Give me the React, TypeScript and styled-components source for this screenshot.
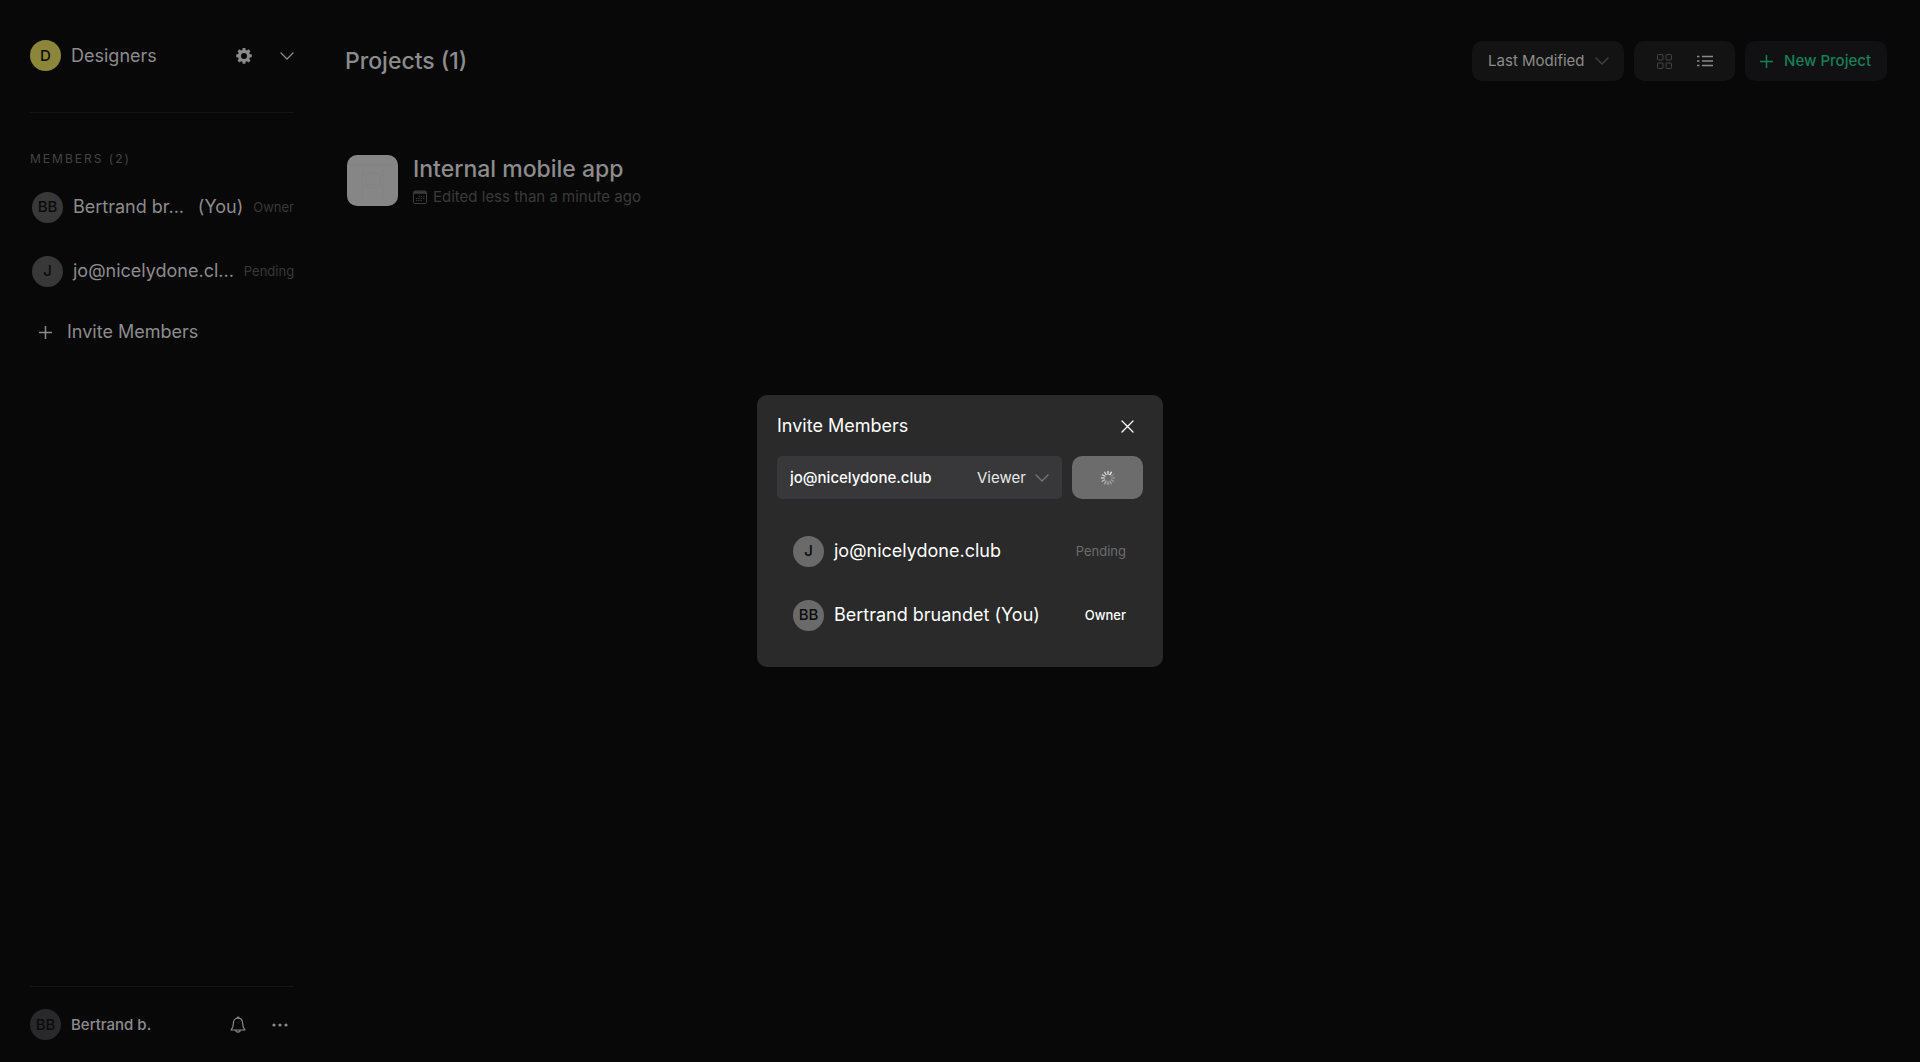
import React from "react";
import styled, { createGlobalStyle } from "styled-components";

const GlobalStyle = createGlobalStyle`
  *, *::before, *::after { box-sizing: border-box; }
  html, body { margin: 0; background: #080808; }
  body {
    font-family: Inter, "Liberation Sans", sans-serif;
    font-size: 18px;
    line-height: 24px;
    color: #8c8c8c;
  }
  button, input, select { font: inherit; color: inherit; }
  h1, h2, h3, p, ul { margin: 0; padding: 0; font-weight: 400; }
  ul { list-style: none; }
`;

const Page = styled.div`
  display: flex;
  min-height: 100vh;
`;

const Sidebar = styled.aside`
  display: flex;
  flex-direction: column;
  width: 324px;
  padding: 40px 30px 22px;
`;

const Main = styled.main`
  flex: 1;
  padding: 41px 33px 40px 21px;
`;

const IconButton = styled.button<{ $width?: number }>`
  display: grid;
  place-items: center;
  width: ${(p) => p.$width ?? 28}px;
  height: 28px;
  padding: 0;
  border: 0;
  background: none;
`;

const Avatar = styled.span<{ $bg: string }>`
  display: grid;
  place-items: center;
  flex: none;
  width: 31px;
  height: 31px;
  border-radius: 50%;
  background: ${(p) => p.$bg};
  color: #0b0b0b;
  font-size: 15px;
  line-height: 20px;
  font-weight: 500;
`;

const TeamRow = styled.header`
  display: flex;
  align-items: center;
  gap: 10px;
  padding-bottom: 41px;
  border-bottom: 1px solid #131414;
`;

const TeamName = styled.h2`
  flex: 1;
  font-size: 18px;
`;

const Actions = styled.div<{ $gap: number }>`
  display: flex;
  gap: ${(p) => p.$gap}px;
`;

const SectionLabel = styled.h3`
  margin-top: 38px;
  font-size: 12px;
  line-height: 16px;
  letter-spacing: 2px;
  color: #444;
`;

const MemberList = styled.ul`
  margin-top: 8px;
`;

const MemberItem = styled.li`
  display: flex;
  align-items: center;
  height: 64px;
  padding-left: 2px;
  gap: 10px;
`;

const MemberName = styled.span`
  flex: 1;
  white-space: nowrap;
`;

const Role = styled.span<{ $color: string; $strong?: boolean }>`
  font-size: 13px;
  line-height: 20px;
  font-weight: ${(p) => (p.$strong ? 500 : 400)};
  color: ${(p) => p.$color};
`;

const InviteButton = styled.button`
  display: flex;
  align-items: center;
  align-self: flex-start;
  gap: 15px;
  margin-top: 17px;
  padding: 0 0 0 9px;
  border: 0;
  background: none;
`;

const UserRow = styled.footer`
  display: flex;
  align-items: center;
  gap: 10px;
  margin-top: auto;
  padding: 22px 0 0;
  border-top: 1px solid #131414;
`;

const UserName = styled.span`
  flex: 1;
  font-size: 15px;
  font-weight: 500;
`;

const Toolbar = styled.header`
  display: flex;
  align-items: center;
  gap: 10px;
`;

const PageTitle = styled.h1`
  flex: 1;
  font-size: 23px;
  line-height: 32px;
  font-weight: 500;
`;

const Pill = styled.div`
  display: flex;
  align-items: center;
  height: 40px;
  border-radius: 10px;
  background: #131313;
`;

const SortPill = styled(Pill)`
  position: relative;
`;

const SelectChevron = styled.span<{ $right: number }>`
  position: absolute;
  top: 0;
  bottom: 0;
  right: ${(p) => p.$right}px;
  display: grid;
  place-items: center;
  pointer-events: none;
`;

const SortSelect = styled.select`
  appearance: none;
  width: 152px;
  height: 40px;
  padding: 0 0 0 16px;
  border: 0;
  background: none;
  font-size: 15px;
`;

const ViewPill = styled(Pill)`
  gap: 13px;
  padding: 0 16px;
`;

const NewButton = styled.button`
  display: flex;
  align-items: center;
  gap: 11px;
  height: 40px;
  padding: 0 16px 0 15px;
  border: 0;
  border-radius: 10px;
  background: #111113;
  color: #158055;
  font-size: 15px;
  font-weight: 500;
`;

const Project = styled.article`
  display: flex;
  align-items: center;
  gap: 15px;
  margin-top: 70px;
  padding-left: 2px;
`;

const Thumb = styled.div`
  width: 51px;
  height: 51px;
  border-radius: 10px;
  background: #868686;
  overflow: hidden;
`;

const ProjectText = styled.div`
  padding-top: 2px;
`;

const ProjectName = styled.h2`
  font-size: 23px;
  line-height: 32px;
  font-weight: 500;
`;

const Edited = styled.p`
  display: flex;
  align-items: center;
  gap: 6px;
  font-size: 15px;
  color: #3b3b3b;
`;

const Overlay = styled.div`
  position: fixed;
  inset: 0;
  display: grid;
  place-items: center;
`;

const Dialog = styled.section`
  width: 406px;
  padding: 17px 20px 20px;
  border-radius: 10px;
  background: #2a2a2a;
  color: #fff;
`;

const DialogHead = styled.header`
  display: flex;
  align-items: center;
  justify-content: space-between;
  padding-right: 2px;
  margin-bottom: 16px;
`;

const DialogTitle = styled.h2`
  font-size: 18px;
`;

const Form = styled.form`
  display: flex;
  gap: 10px;
  margin-bottom: 20px;
`;

const Field = styled.div`
  position: relative;
  display: flex;
  flex: 1;
  min-width: 0;
  height: 43px;
  border-radius: 5px;
  background: #38383a;
`;

const EmailInput = styled.input`
  flex: 1;
  min-width: 0;
  padding: 0 0 0 13px;
  border: 0;
  outline: 0;
  background: none;
  font-size: 15px;
  font-weight: 500;
`;

const RoleSelect = styled.select`
  appearance: none;
  width: 85px;
  padding: 0;
  border: 0;
  background: none;
  color: #e8e8e8;
  font-size: 15px;
`;

const SubmitButton = styled.button`
  display: grid;
  place-items: center;
  flex: none;
  width: 71px;
  height: 43px;
  padding: 0;
  border: 0;
  border-radius: 10px;
  background: #6c6c6c;
`;

const DialogList = styled.ul`
  padding: 0 16px;
`;

const DialogMember = styled(MemberItem)`
  padding: 0 1px 0 0;
`;

const truncate = (text: string, length: number) =>
  text.length > length ? `${text.slice(0, length)}...` : text;

const Chevron = ({ color = "#8a8a8a" }: { color?: string }) => (
  <svg width="14" height="8" viewBox="0 0 14 8" fill="none" stroke={color} strokeWidth="1.3" strokeLinecap="round" strokeLinejoin="round">
    <path d="M1 1l6 6 6-6" />
  </svg>
);

const Plus = () => (
  <svg width="13" height="13" viewBox="0 0 13 13" fill="none" stroke="currentColor" strokeWidth="1.5">
    <path d="M6.5 0v13M0 6.5h13" />
  </svg>
);

const Gear = () => (
  <svg width="16" height="16" viewBox="0 0 16 16" fill="#8a8a8a">
    <path
      fillRule="evenodd"
      d="M6.7 0h2.6l.4 2 1.1.5 1.8-1.2 1.9 1.9-1.2 1.8.4 1.1 2.1.4v2.7l-2.1.4-.4 1.2 1.2 1.8-1.9 1.8-1.8-1.1-1.1.4-.4 2.1H6.7l-.4-2.1-1.1-.4-1.8 1.1-1.9-1.8 1.2-1.8-.5-1.2L.2 9.2V6.5l2-.4.5-1.1-1.2-1.8 1.9-1.9 1.8 1.2L6.3 2zM8 5a3 3 0 1 0 0 6 3 3 0 0 0 0-6z"
    />
  </svg>
);

const Bell = () => (
  <svg width="16" height="18" viewBox="0 0 16 18" fill="none" stroke="#8a8a8a" strokeWidth="1.2" strokeLinejoin="round">
    <path d="M8 2.2c-3 0-4.6 2.2-4.6 5 0 3.5-.8 5-2.3 6.8h13.8c-1.5-1.8-2.3-3.3-2.3-6.8 0-2.8-1.6-5-4.6-5zM7 2.2a1 1 0 0 1 2 0M5.8 14a2.2 2.2 0 0 0 4.4 0" />
  </svg>
);

const Dots = () => (
  <svg width="16" height="4" viewBox="0 0 16 4" fill="#8a8a8a">
    <circle cx="2" cy="2" r="1.6" />
    <circle cx="8" cy="2" r="1.6" />
    <circle cx="14" cy="2" r="1.6" />
  </svg>
);

const GridIcon = () => (
  <svg width="15" height="15" viewBox="0 0 15 15" fill="none" stroke="#454545">
    <rect x=".5" y=".5" width="5.5" height="5.5" rx=".8" />
    <rect x="9" y=".5" width="5.5" height="5.5" rx=".8" />
    <rect x=".5" y="9" width="5.5" height="5.5" rx=".8" />
    <rect x="9" y="9" width="5.5" height="5.5" rx=".8" />
  </svg>
);

const ListIcon = () => (
  <svg width="16" height="12" viewBox="0 0 16 12" fill="none" stroke="#8a8a8a" strokeWidth="1.3">
    <path d="M0 1.5h2.5M5 1.5h11M0 6h2.5M5 6h11M0 10.5h2.5M5 10.5h11" />
  </svg>
);

const Calendar = () => (
  <svg width="14" height="14" viewBox="0 0 14 14" fill="none" stroke="#3b3b3b">
    <rect x=".5" y="1" width="13" height="12.5" rx="1.5" />
    <path d="M1 2.5h12" strokeWidth="2.5" />
    <path d="M5.5 6.5h6M3 8.5h8.5M3 10.5h6" strokeDasharray="1.3 1" />
  </svg>
);

const Close = () => (
  <svg width="13" height="13" viewBox="0 0 13 13" fill="none" stroke="#fff" strokeWidth="1.3" strokeLinecap="round">
    <path d="M1 1l11 11M12 1L1 12" />
  </svg>
);

const Spinner = () => (
  <svg width="16" height="16" viewBox="-8 -8 16 16" stroke="#fff" strokeWidth="1.3" strokeLinecap="round">
    {Array.from({ length: 12 }, (_, i) => (
      <path key={i} d="M0-3.8V-6.6" transform={`rotate(${30 - i * 30})`} opacity={i === 0 ? 1 : 0.15 + (i > 0 ? (12 - i) * 0.06 : 0)} />
    ))}
  </svg>
);

const ThumbArt = () => (
  <svg width="51" height="51" viewBox="0 0 51 51" fill="none" stroke="#7f7f7f">
    <path d="M16 14v32M36 14v32M2 10h46M16 30h20" opacity=".5" />
    <rect x="19" y="18" width="14" height="15" rx="3" opacity=".5" />
  </svg>
);

export default function App() {
  return (
    <>
      <GlobalStyle />
      <Page>
        <Sidebar>
          <TeamRow>
            <Avatar $bg="#8b8639">D</Avatar>
            <TeamName>Designers</TeamName>
            <Actions $gap={22}>
              <IconButton aria-label="Team settings"><Gear /></IconButton>
              <IconButton $width={14} aria-label="Switch team"><Chevron /></IconButton>
            </Actions>
          </TeamRow>
          <SectionLabel>MEMBERS (2)</SectionLabel>
          <MemberList>
            <MemberItem>
              <Avatar $bg="#383838">BB</Avatar>
              <MemberName>{truncate("Bertrand bruandet", 11)}</MemberName>
              <span>(You)</span>
              <Role $color="#383838">Owner</Role>
            </MemberItem>
            <MemberItem>
              <Avatar $bg="#383838">J</Avatar>
              <MemberName>{truncate("jo@nicelydone.club", 16)}</MemberName>
              <Role $color="#383838">Pending</Role>
            </MemberItem>
          </MemberList>
          <InviteButton><Plus />Invite Members</InviteButton>
          <UserRow>
            <Avatar $bg="#29292b">BB</Avatar>
            <UserName>Bertrand b.</UserName>
            <Actions $gap={14}>
              <IconButton aria-label="Notifications"><Bell /></IconButton>
              <IconButton aria-label="More"><Dots /></IconButton>
            </Actions>
          </UserRow>
        </Sidebar>
        <Main>
          <Toolbar>
            <PageTitle>Projects (1)</PageTitle>
            <SortPill>
              <SortSelect aria-label="Sort projects" defaultValue="modified">
                <option value="modified">Last Modified</option>
              </SortSelect>
              <SelectChevron $right={15}><Chevron color="#444" /></SelectChevron>
            </SortPill>
            <ViewPill>
              <IconButton aria-label="Grid view"><GridIcon /></IconButton>
              <IconButton aria-label="List view"><ListIcon /></IconButton>
            </ViewPill>
            <NewButton><Plus />New Project</NewButton>
          </Toolbar>
          <Project>
            <Thumb><ThumbArt /></Thumb>
            <ProjectText>
              <ProjectName>Internal mobile app</ProjectName>
              <Edited><Calendar />Edited less than a minute ago</Edited>
            </ProjectText>
          </Project>
        </Main>
      </Page>
      <Overlay>
        <Dialog role="dialog" aria-labelledby="invite-title">
          <DialogHead>
            <DialogTitle id="invite-title">Invite Members</DialogTitle>
            <IconButton aria-label="Close"><Close /></IconButton>
          </DialogHead>
          <Form>
            <Field>
              <EmailInput type="email" aria-label="Email" defaultValue="jo@nicelydone.club" />
              <RoleSelect aria-label="Role" defaultValue="viewer">
                <option value="viewer">Viewer</option>
              </RoleSelect>
              <SelectChevron $right={13}><Chevron color="#777" /></SelectChevron>
            </Field>
            <SubmitButton type="button" aria-label="Sending invite"><Spinner /></SubmitButton>
          </Form>
          <DialogList>
            <DialogMember>
              <Avatar $bg="#6a6a6a">J</Avatar>
              <MemberName>jo@nicelydone.club</MemberName>
              <Role $color="#6c6c6c">Pending</Role>
            </DialogMember>
            <DialogMember>
              <Avatar $bg="#6a6a6a">BB</Avatar>
              <MemberName>Bertrand bruandet (You)</MemberName>
              <Role $color="#fff" $strong>Owner</Role>
            </DialogMember>
          </DialogList>
        </Dialog>
      </Overlay>
    </>
  );
}
